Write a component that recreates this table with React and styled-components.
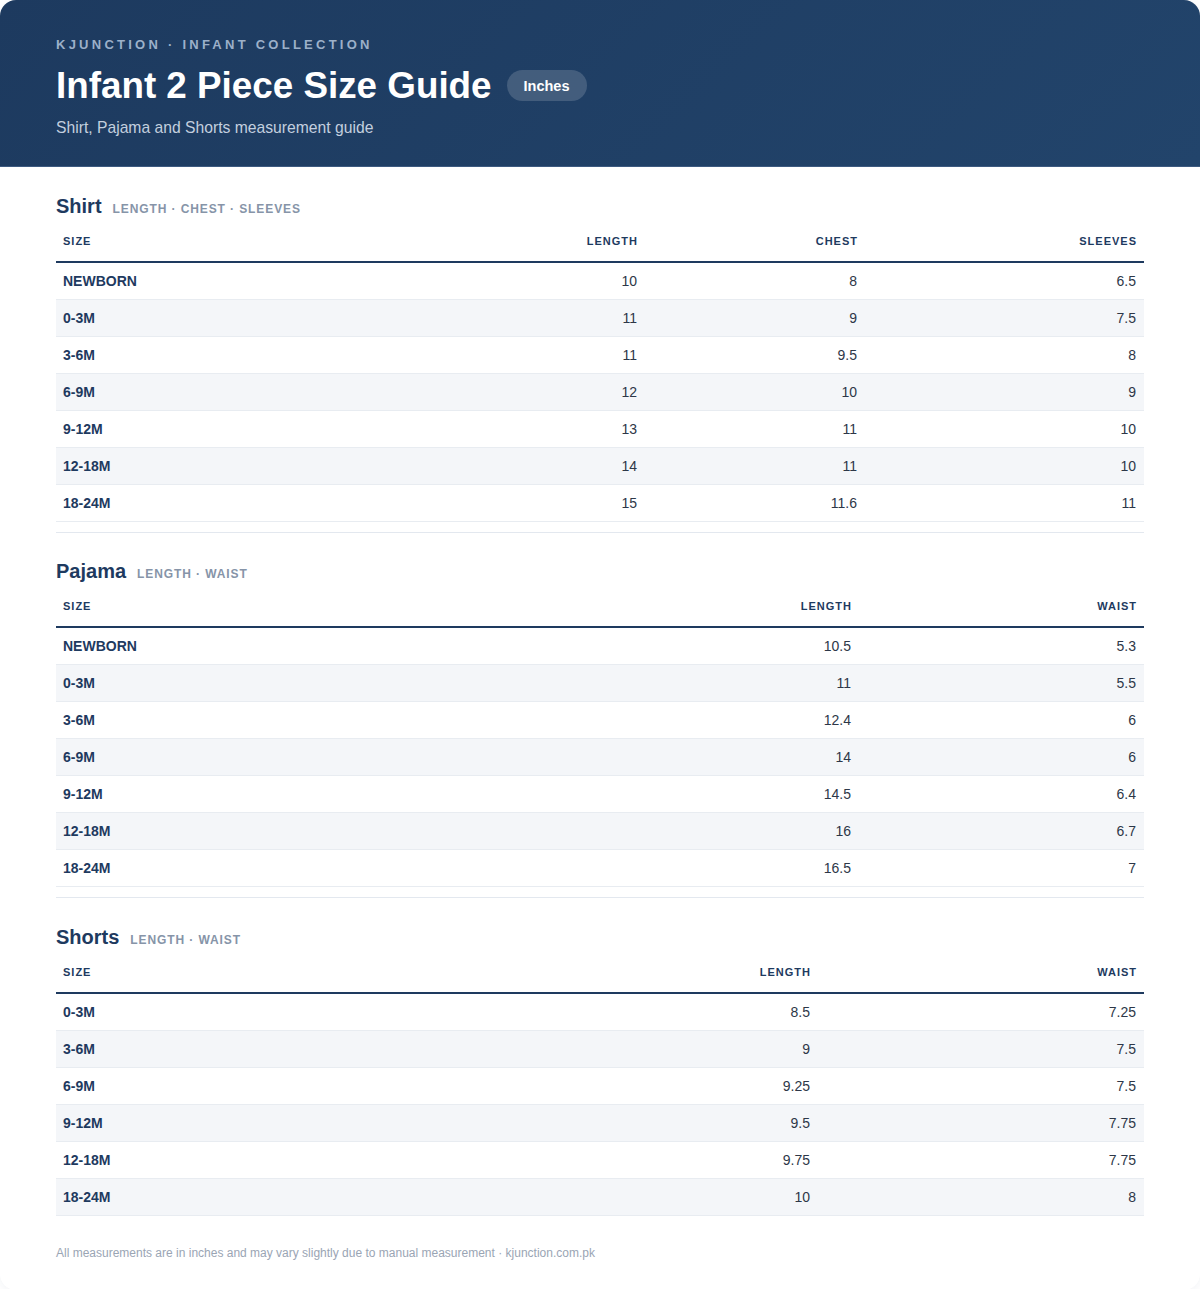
import React from "react";
import styled, { createGlobalStyle } from "styled-components";

const GlobalStyle = createGlobalStyle`
  html, body {
    margin: 0;
    padding: 0;
    background: #ffffff;
  }
  body {
    font-family: "Liberation Sans", Arial, sans-serif;
  }
`;

const Card = styled.div`
  width: 100%;
  min-height: 1289px;
  background: #ffffff;
  border-radius: 16px;
  overflow: hidden;
  box-shadow: 0 2px 10px rgba(30, 58, 95, 0.06);
`;

const Header = styled.header`
  padding: 37px 56px 29px;
  background: linear-gradient(135deg, #1d3a5f 0%, #22446b 100%);
  border-bottom: 1px solid #3d5a80;
  color: #ffffff;
`;

const Eyebrow = styled.div`
  font-size: 13px;
  line-height: 16px;
  font-weight: 700;
  letter-spacing: 3.25px;
  color: #9cb0c9;
  margin-bottom: 11px;
`;

const TitleRow = styled.div`
  display: flex;
  align-items: center;
  gap: 15px;
`;

const Title = styled.h1`
  margin: 0;
  font-size: 36.8px;
  line-height: 43px;
  font-weight: 700;
`;

const Pill = styled.span`
  display: inline-flex;
  align-items: center;
  height: 31px;
  padding: 0 17px;
  border-radius: 16px;
  background: rgba(255, 255, 255, 0.16);
  font-size: 14.5px;
  font-weight: 700;
`;

const Subtitle = styled.p`
  margin: 12px 0 0;
  font-size: 15.7px;
  line-height: 18px;
  color: #c3cfdf;
`;

const Body = styled.main`
  padding: 0 56px;
`;

const Section = styled.section`
  padding: 26.5px 0 10px;
  border-bottom: ${(p) => (p.$last ? "none" : "1px solid #e3e8ef")};
`;

const SectionHead = styled.div`
  display: flex;
  align-items: baseline;
  gap: 11px;
  margin-bottom: 4px;
`;

const SectionTitle = styled.h2`
  margin: 0;
  font-size: 20px;
  line-height: 24px;
  font-weight: 700;
  color: #1e3a5f;
`;

const SectionTags = styled.span`
  font-size: 12px;
  font-weight: 700;
  letter-spacing: 0.9px;
  color: #8694a8;
`;

const Table = styled.table`
  width: 100%;
  table-layout: fixed;
  border-collapse: collapse;
`;

const Th = styled.th`
  padding: 13px 7px;
  font-size: 11px;
  line-height: 13px;
  font-weight: 700;
  letter-spacing: 1px;
  color: #1e3a5f;
  text-align: ${(p) => (p.$first ? "left" : "right")};
  border-bottom: 2px solid #1e3a5f;
`;

const Row = styled.tr`
  border-bottom: 1px solid #e8ecf1;
  &:nth-child(even) {
    background: #f4f6f9;
  }
`;

const Td = styled.td`
  padding: 10px 8px 10px 7px;
  font-size: 14px;
  line-height: 16px;
  text-align: ${(p) => (p.$first ? "left" : "right")};
  font-weight: ${(p) => (p.$first ? 700 : 400)};
  color: ${(p) => (p.$first ? "#1e3a5f" : "#2d3748")};
`;

const Footer = styled.footer`
  padding: 20px 56px 30px;
  font-size: 12px;
  line-height: 14px;
  color: #9aa5b4;
`;

const sections = [
  {
    name: "Shirt",
    tags: "LENGTH · CHEST · SLEEVES",
    cols: ["SIZE", "LENGTH", "CHEST", "SLEEVES"],
    widths: [490, 99, 220, 279],
    rows: [
      ["NEWBORN", "10", "8", "6.5"],
      ["0-3M", "11", "9", "7.5"],
      ["3-6M", "11", "9.5", "8"],
      ["6-9M", "12", "10", "9"],
      ["9-12M", "13", "11", "10"],
      ["12-18M", "14", "11", "10"],
      ["18-24M", "15", "11.6", "11"],
    ],
  },
  {
    name: "Pajama",
    tags: "LENGTH · WAIST",
    cols: ["SIZE", "LENGTH", "WAIST"],
    widths: [600, 203, 285],
    rows: [
      ["NEWBORN", "10.5", "5.3"],
      ["0-3M", "11", "5.5"],
      ["3-6M", "12.4", "6"],
      ["6-9M", "14", "6"],
      ["9-12M", "14.5", "6.4"],
      ["12-18M", "16", "6.7"],
      ["18-24M", "16.5", "7"],
    ],
  },
  {
    name: "Shorts",
    tags: "LENGTH · WAIST",
    cols: ["SIZE", "LENGTH", "WAIST"],
    widths: [600, 162, 326],
    rows: [
      ["0-3M", "8.5", "7.25"],
      ["3-6M", "9", "7.5"],
      ["6-9M", "9.25", "7.5"],
      ["9-12M", "9.5", "7.75"],
      ["12-18M", "9.75", "7.75"],
      ["18-24M", "10", "8"],
    ],
  },
];

const SizeTable = ({ section, last }) => (
  <Section $last={last}>
    <SectionHead>
      <SectionTitle>{section.name}</SectionTitle>
      <SectionTags>{section.tags}</SectionTags>
    </SectionHead>
    <Table>
      <colgroup>
        {section.widths.map((w, i) => (
          <col key={i} style={{ width: w }} />
        ))}
      </colgroup>
      <thead>
        <tr>
          {section.cols.map((c, i) => (
            <Th key={c} $first={i === 0}>
              {c}
            </Th>
          ))}
        </tr>
      </thead>
      <tbody>
        {section.rows.map((r) => (
          <Row key={r[0]}>
            {r.map((v, i) => (
              <Td key={i} $first={i === 0}>
                {v}
              </Td>
            ))}
          </Row>
        ))}
      </tbody>
    </Table>
  </Section>
);

const App = () => {
  return (
    <>
      <GlobalStyle />
      <Card>
        <Header>
          <Eyebrow>KJUNCTION · INFANT COLLECTION</Eyebrow>
          <TitleRow>
            <Title>Infant 2 Piece Size Guide</Title>
            <Pill>Inches</Pill>
          </TitleRow>
          <Subtitle>Shirt, Pajama and Shorts measurement guide</Subtitle>
        </Header>
        <Body>
          {sections.map((s, i) => (
            <SizeTable key={s.name} section={s} last={i === sections.length - 1} />
          ))}
        </Body>
        <Footer>
          All measurements are in inches and may vary slightly due to manual
          measurement · kjunction.com.pk
        </Footer>
      </Card>
    </>
  );
};

export default App;
